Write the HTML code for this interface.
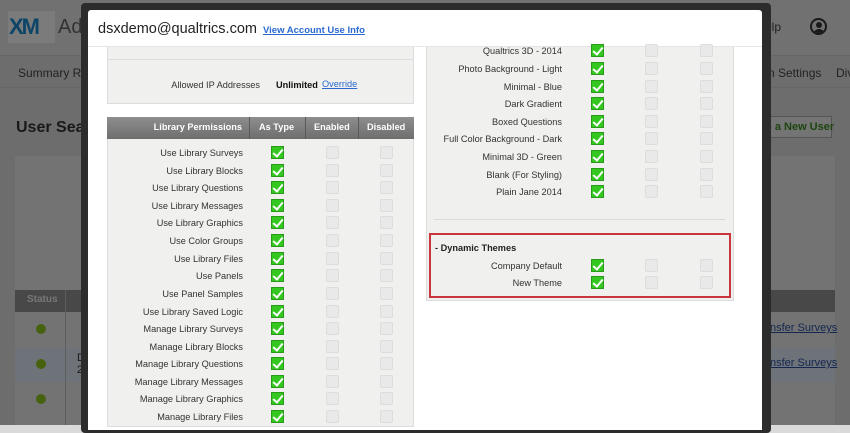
<!DOCTYPE html><html><head><meta charset="utf-8"><style>
*{margin:0;padding:0;box-sizing:border-box}
html,body{background:#dadada}
body{width:850px;height:425px;overflow:hidden;font-family:"Liberation Sans",sans-serif;position:relative}
.a{position:absolute}
.lbl{position:absolute;font-size:9.2px;color:#333;text-align:right;white-space:nowrap}
.ck{position:absolute;width:13px;height:13px;background:#33c71f;border:1px solid #2a9a1a}
.ck::after{content:"";position:absolute;left:3px;top:0px;width:4px;height:8px;border:solid #fff;border-width:0 2px 2px 0;transform:rotate(40deg)}
.bx{position:absolute;width:13px;height:13px;background:#e9e9e9;border:1px solid #ddd;border-radius:2px}
</style></head><body>
<!-- background page (light) -->
<div class="a" style="left:0;top:0;width:850px;height:425px;background:#dadada"></div>
<div class="a" style="left:0;top:0;width:850px;height:55px;background:#e2e2e2"></div>
<div class="a" style="left:8px;top:11px;width:47px;height:32px;background:#f6f6f6"></div>
<div class="a" style="left:9px;top:14px;font-size:22px;font-weight:bold;color:#1a8ad0;letter-spacing:-2px">XM</div>
<div class="a" style="left:58px;top:16px;font-size:20px;color:#666">Adm</div>
<div class="a" style="left:765px;top:20px;font-size:12px;color:#444">elp</div>
<div class="a" style="left:810px;top:18px;width:17px;height:17px;border:2px solid #333;border-radius:50%;overflow:hidden"><div class="a" style="left:4px;top:2px;width:6px;height:6px;background:#333;border-radius:50%"></div><div class="a" style="left:1px;top:9px;width:12px;height:8px;background:#333;border-radius:6px 6px 0 0"></div></div>
<div class="a" style="left:0;top:55px;width:850px;height:1px;background:#ccc"></div>
<div class="a" style="left:18px;top:66px;font-size:12px;color:#444">Summary Re</div>
<div class="a" style="left:768px;top:66px;font-size:12px;color:#444">n Settings</div>
<div class="a" style="left:836px;top:66px;font-size:12px;color:#444">Div</div>
<div class="a" style="left:0;top:87px;width:850px;height:1px;background:#ccc"></div>
<div class="a" style="left:16px;top:119px;font-size:16px;font-weight:bold;color:#333">User Sear</div>
<div class="a" style="left:755px;top:116px;width:77px;height:22px;border:1px solid #aaa;background:#e8e8e8"></div>
<div class="a" style="left:762px;top:121px;font-size:11px;font-weight:bold;color:#3a8a20">te a New User</div>
<div class="a" style="left:15px;top:156px;width:70px;height:269px;background:#e6e6e6"></div>
<div class="a" style="left:760px;top:156px;width:75px;height:269px;background:#e6e6e6"></div>
<div class="a" style="left:15px;top:290px;width:820px;height:22px;background:#909090"></div>
<div class="a" style="left:27px;top:294px;font-size:10px;font-weight:bold;color:#eee">Status</div>
<div class="a" style="left:15px;top:348px;width:820px;height:34px;background:#dde4f2"></div>
<div class="a" style="left:65px;top:290px;width:1px;height:135px;background:#bbb"></div>
<div class="a" style="left:36px;top:324px;width:10px;height:10px;border-radius:50%;background:#8ec41e"></div>
<div class="a" style="left:36px;top:359px;width:10px;height:10px;border-radius:50%;background:#8ec41e"></div>
<div class="a" style="left:36px;top:394px;width:10px;height:10px;border-radius:50%;background:#8ec41e"></div>
<div class="a" style="left:77px;top:352px;font-size:11px;color:#333;line-height:12px">D<br>2</div>
<div class="a" style="left:770px;top:322px;font-size:11px;color:#2a50a0;text-decoration:underline">nsfer Surveys</div>
<div class="a" style="left:770px;top:357px;font-size:11px;color:#2a50a0;text-decoration:underline">nsfer Surveys</div>
<!-- overlay -->
<div class="a" style="left:0;top:0;width:850px;height:425px;background:rgba(0,0,0,0.5)"></div>
<!-- modal -->
<div class="a" style="left:81px;top:3px;width:690px;height:430px;background:#2c2c2c;border-radius:4px"></div>
<div class="a" style="left:88px;top:10px;width:674px;height:420px;background:#fff;border-radius:3px 3px 0 0"></div>
<div class="a" style="left:98px;top:21px;font-size:14.5px;color:#222;white-space:nowrap">dsxdemo@qualtrics.com</div>
<div class="a" style="left:263px;top:25px;font-size:9.5px;font-weight:bold;color:#2a6ad0;text-decoration:underline;white-space:nowrap">View Account Use Info</div>
<div class="a" style="left:88px;top:46px;width:674px;height:1px;background:#e4e4e4"></div>
<!-- left top panel -->
<div class="a" style="left:107px;top:47px;width:307px;height:57px;background:#f0f0ee;border:1px solid #dcdcdc;border-top:none"></div>
<div class="a" style="left:107px;top:59px;width:307px;height:1px;background:#dcdcdc"></div>
<div class="lbl" style="right:590px;top:80px">Allowed IP Addresses</div>
<div class="a" style="left:276px;top:80px;font-size:9.2px;font-weight:bold;color:#111">Unlimited</div>
<div class="a" style="left:322px;top:79px;font-size:9.2px;color:#2a6ad0;text-decoration:underline">Override</div>
<!-- library table -->
<div class="a" style="left:107px;top:117px;width:307px;height:310px;background:#f0f0ee;border:1px solid #dcdcdc"></div>
<div class="a" style="left:107px;top:117px;width:307px;height:22px;background:linear-gradient(#8e8e8e,#6e6e6e)"></div>
<div class="a" style="left:249px;top:117px;width:1px;height:22px;background:#5a5a5a"></div>
<div class="a" style="left:305px;top:117px;width:1px;height:22px;background:#5a5a5a"></div>
<div class="a" style="left:358px;top:117px;width:1px;height:22px;background:#5a5a5a"></div>
<div class="a" style="right:608px;top:122px;white-space:nowrap;font-size:9.2px;font-weight:bold;color:#fff">Library Permissions</div>
<div class="a" style="left:259px;top:122px;font-size:9.2px;font-weight:bold;color:#fff;white-space:nowrap">As Type</div>
<div class="a" style="left:314px;top:122px;font-size:9.2px;font-weight:bold;color:#fff">Enabled</div>
<div class="a" style="left:367px;top:122px;font-size:9.2px;font-weight:bold;color:#fff">Disabled</div>

<div class="lbl" style="right:607px;top:148px">Use Library Surveys</div><div class="ck" style="left:271px;top:146px"></div><div class="bx" style="left:326px;top:146px"></div><div class="bx" style="left:380px;top:146px"></div>
<div class="lbl" style="right:607px;top:166px">Use Library Blocks</div><div class="ck" style="left:271px;top:164px"></div><div class="bx" style="left:326px;top:164px"></div><div class="bx" style="left:380px;top:164px"></div>
<div class="lbl" style="right:607px;top:183px">Use Library Questions</div><div class="ck" style="left:271px;top:181px"></div><div class="bx" style="left:326px;top:181px"></div><div class="bx" style="left:380px;top:181px"></div>
<div class="lbl" style="right:607px;top:201px">Use Library Messages</div><div class="ck" style="left:271px;top:199px"></div><div class="bx" style="left:326px;top:199px"></div><div class="bx" style="left:380px;top:199px"></div>
<div class="lbl" style="right:607px;top:218px">Use Library Graphics</div><div class="ck" style="left:271px;top:216px"></div><div class="bx" style="left:326px;top:216px"></div><div class="bx" style="left:380px;top:216px"></div>
<div class="lbl" style="right:607px;top:236px">Use Color Groups</div><div class="ck" style="left:271px;top:234px"></div><div class="bx" style="left:326px;top:234px"></div><div class="bx" style="left:380px;top:234px"></div>
<div class="lbl" style="right:607px;top:254px">Use Library Files</div><div class="ck" style="left:271px;top:252px"></div><div class="bx" style="left:326px;top:252px"></div><div class="bx" style="left:380px;top:252px"></div>
<div class="lbl" style="right:607px;top:271px">Use Panels</div><div class="ck" style="left:271px;top:269px"></div><div class="bx" style="left:326px;top:269px"></div><div class="bx" style="left:380px;top:269px"></div>
<div class="lbl" style="right:607px;top:289px">Use Panel Samples</div><div class="ck" style="left:271px;top:287px"></div><div class="bx" style="left:326px;top:287px"></div><div class="bx" style="left:380px;top:287px"></div>
<div class="lbl" style="right:607px;top:307px">Use Library Saved Logic</div><div class="ck" style="left:271px;top:305px"></div><div class="bx" style="left:326px;top:305px"></div><div class="bx" style="left:380px;top:305px"></div>
<div class="lbl" style="right:607px;top:324px">Manage Library Surveys</div><div class="ck" style="left:271px;top:322px"></div><div class="bx" style="left:326px;top:322px"></div><div class="bx" style="left:380px;top:322px"></div>
<div class="lbl" style="right:607px;top:342px">Manage Library Blocks</div><div class="ck" style="left:271px;top:340px"></div><div class="bx" style="left:326px;top:340px"></div><div class="bx" style="left:380px;top:340px"></div>
<div class="lbl" style="right:607px;top:359px">Manage Library Questions</div><div class="ck" style="left:271px;top:357px"></div><div class="bx" style="left:326px;top:357px"></div><div class="bx" style="left:380px;top:357px"></div>
<div class="lbl" style="right:607px;top:377px">Manage Library Messages</div><div class="ck" style="left:271px;top:375px"></div><div class="bx" style="left:326px;top:375px"></div><div class="bx" style="left:380px;top:375px"></div>
<div class="lbl" style="right:607px;top:394px">Manage Library Graphics</div><div class="ck" style="left:271px;top:392px"></div><div class="bx" style="left:326px;top:392px"></div><div class="bx" style="left:380px;top:392px"></div>
<div class="lbl" style="right:607px;top:412px">Manage Library Files</div><div class="ck" style="left:271px;top:410px"></div><div class="bx" style="left:326px;top:410px"></div><div class="bx" style="left:380px;top:410px"></div>

<!-- right panel -->
<div class="a" style="left:426px;top:47px;width:308px;height:254px;background:#f0f0ee;border:1px solid #dcdcdc;border-top:none"></div>
<div class="lbl" style="right:288px;top:46px">Qualtrics 3D - 2014</div><div class="ck" style="left:591px;top:44px"></div><div class="bx" style="left:645px;top:44px"></div><div class="bx" style="left:700px;top:44px"></div>
<div class="lbl" style="right:288px;top:64px">Photo Background - Light</div><div class="ck" style="left:591px;top:62px"></div><div class="bx" style="left:645px;top:62px"></div><div class="bx" style="left:700px;top:62px"></div>
<div class="lbl" style="right:288px;top:82px">Minimal - Blue</div><div class="ck" style="left:591px;top:80px"></div><div class="bx" style="left:645px;top:80px"></div><div class="bx" style="left:700px;top:80px"></div>
<div class="lbl" style="right:288px;top:99px">Dark Gradient</div><div class="ck" style="left:591px;top:97px"></div><div class="bx" style="left:645px;top:97px"></div><div class="bx" style="left:700px;top:97px"></div>
<div class="lbl" style="right:288px;top:117px">Boxed Questions</div><div class="ck" style="left:591px;top:115px"></div><div class="bx" style="left:645px;top:115px"></div><div class="bx" style="left:700px;top:115px"></div>
<div class="lbl" style="right:288px;top:134px">Full Color Background - Dark</div><div class="ck" style="left:591px;top:132px"></div><div class="bx" style="left:645px;top:132px"></div><div class="bx" style="left:700px;top:132px"></div>
<div class="lbl" style="right:288px;top:152px">Minimal 3D - Green</div><div class="ck" style="left:591px;top:150px"></div><div class="bx" style="left:645px;top:150px"></div><div class="bx" style="left:700px;top:150px"></div>
<div class="lbl" style="right:288px;top:170px">Blank (For Styling)</div><div class="ck" style="left:591px;top:168px"></div><div class="bx" style="left:645px;top:168px"></div><div class="bx" style="left:700px;top:168px"></div>
<div class="lbl" style="right:288px;top:187px">Plain Jane 2014</div><div class="ck" style="left:591px;top:185px"></div><div class="bx" style="left:645px;top:185px"></div><div class="bx" style="left:700px;top:185px"></div>
<div class="a" style="left:434px;top:219px;width:291px;height:1px;background:#dadada"></div>
<div class="a" style="left:429px;top:233px;width:302px;height:65px;border:2px solid #c8353a"></div>
<div class="a" style="left:435px;top:243px;font-size:9.2px;font-weight:bold;color:#222">- Dynamic Themes</div>
<div class="lbl" style="right:288px;top:261px">Company Default</div><div class="ck" style="left:591px;top:259px"></div><div class="bx" style="left:645px;top:259px"></div><div class="bx" style="left:700px;top:259px"></div>
<div class="lbl" style="right:288px;top:278px">New Theme</div><div class="ck" style="left:591px;top:276px"></div><div class="bx" style="left:645px;top:276px"></div><div class="bx" style="left:700px;top:276px"></div>
</body></html>
